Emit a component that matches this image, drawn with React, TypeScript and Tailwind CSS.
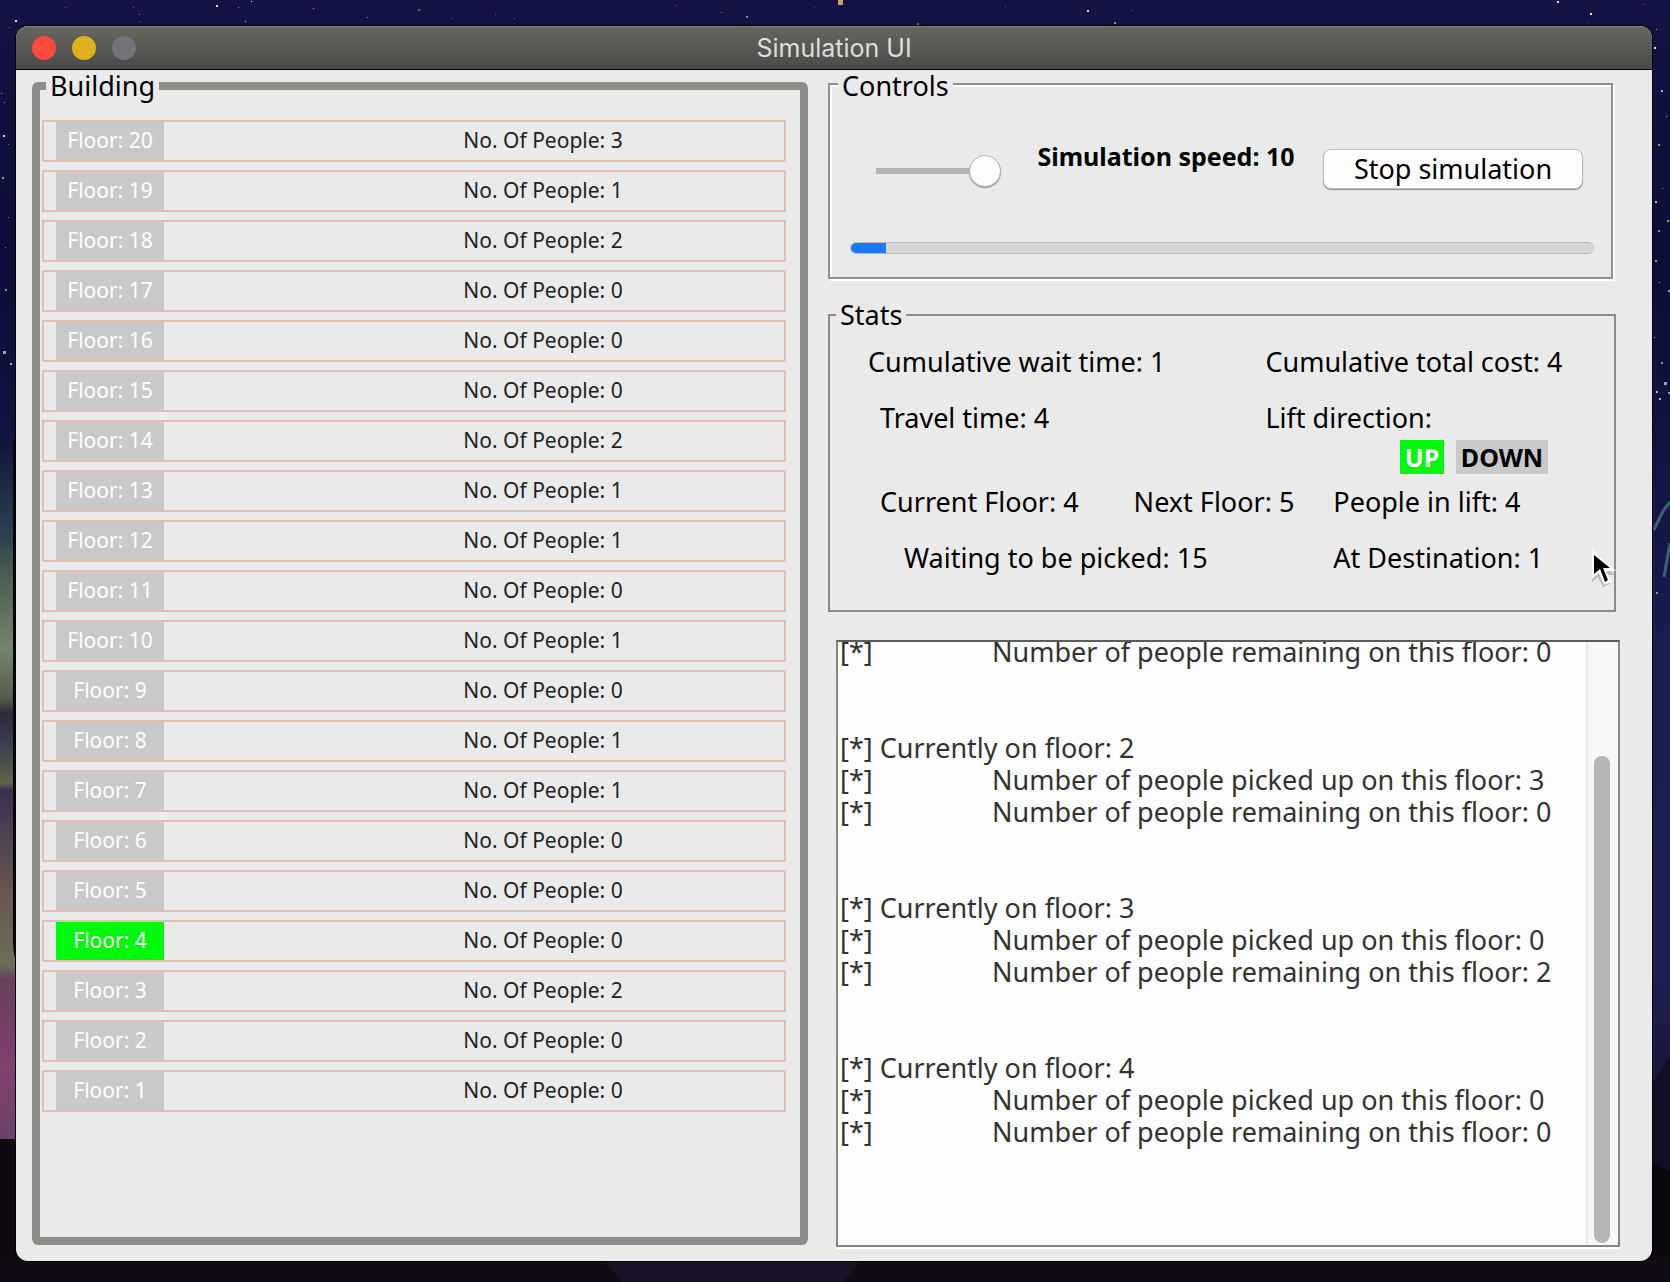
import type { ReactNode } from 'react';

const people = [3, 1, 2, 0, 0, 0, 2, 1, 1, 0, 1, 0, 1, 1, 0, 0, 0, 2, 0, 0];
const floors = people.map((count, i) => ({ number: people.length - i, count }));
const currentFloor = 4;

type LogLine = { text?: string; indent?: boolean };

const visit = (floor: number, picked: number, remaining: number): LogLine[] => [
  { text: `Currently on floor: ${floor}` },
  { text: `Number of people picked up on this floor: ${picked}`, indent: true },
  { text: `Number of people remaining on this floor: ${remaining}`, indent: true },
  {},
  {},
];

const logLines: LogLine[] = [
  { text: 'Number of people remaining on this floor: 0', indent: true },
  {},
  {},
  ...visit(2, 3, 0),
  ...visit(3, 0, 2),
  ...visit(4, 0, 0),
  {},
];

const topStars = [
  [15, 20, 2, '#e8d8d0'], [9, 27, 1, '#c07060'], [133, 7, 1, '#a06070'], [139, 14, 1, '#c07080'], [140, 21, 1, '#b06060'],
  [65, 7, 1, '#8060a0'], [216, 5, 2, '#e8e0d0'], [238, 7, 1, '#c080b0'], [245, 21, 1, '#e0c0a0'], [251, 1, 1, '#f0f0e0'],
  [313, 8, 1, '#c09080'], [367, 17, 1, '#a08070'], [418, 9, 2, '#705068'], [451, 18, 1, '#a06050'], [495, 14, 1, '#806090'],
  [514, 18, 1, '#806090'], [676, 5, 1, '#b04080'], [721, 12, 1, '#c08050'], [746, 16, 2, '#a07080'], [814, 7, 1, '#504080'],
  [838, 0, 5, '#d09a60'], [917, 23, 2, '#a05050'], [1005, 6, 1, '#6050a0'], [1087, 10, 2, '#f0d890'], [1114, 22, 2, '#a08070'],
  [1132, 10, 1, '#6060a0'], [1557, 1, 2, '#f0e0d0'], [1590, 13, 2, '#f0f0f0'], [1587, 22, 1, '#8060a0'], [1644, 4, 1, '#b060a0'],
] as const;

const sideStars = [
  [3, 135, 2, '#d0d0d0'], [4, 102, 1, '#b070a0'], [8, 144, 1, '#a05070'], [2, 177, 2, '#70b0a0'], [8, 217, 1, '#c07060'],
  [5, 247, 1, '#a060a0'], [5, 289, 2, '#60b090'], [3, 351, 3, '#90b090'], [10, 363, 2, '#b0b0b0'], [1, 93, 1, '#a0a0d0'],
  [1656, 29, 1, '#a0a0d0'], [1654, 47, 2, '#e0e0e0'], [1661, 90, 2, '#a0b0c0'], [1666, 116, 1, '#b0b0d0'], [1658, 144, 2, '#b09070'],
  [1662, 188, 1, '#8090c0'], [1655, 201, 2, '#c0c0a0'], [1667, 220, 2, '#90a080'], [1658, 230, 2, '#9090c0'], [1655, 260, 2, '#8090a0'],
  [1659, 282, 1, '#c0b080'], [1668, 290, 2, '#70b0b0'], [1664, 382, 3, '#80b0a0'], [1656, 391, 2, '#b0c0a0'], [1668, 392, 2, '#80a0c0'],
  [1659, 398, 2, '#c0a090'], [1661, 362, 2, '#70a0b0'], [1654, 337, 1, '#c0c0c0'], [1656, 592, 2, '#80a070'],
] as const;

function Wallpaper() {
  return (
    <svg className="absolute inset-0 h-full w-full" viewBox="0 0 1670 1282" preserveAspectRatio="none" aria-hidden="true">
      <defs>
        <linearGradient id="sky" x1="0" y1="0" x2="0" y2="1">
          <stop offset="0" stopColor="#131345" />
          <stop offset="0.2" stopColor="#0b0d36" />
          <stop offset="0.5" stopColor="#181c4e" />
          <stop offset="0.75" stopColor="#1e2054" />
          <stop offset="0.9" stopColor="#15102a" />
          <stop offset="1" stopColor="#0b070d" />
        </linearGradient>
        <linearGradient id="aurora" x1="0" y1="440" x2="0" y2="1140" gradientUnits="userSpaceOnUse">
          <stop offset="0" stopColor="#10153c" />
          <stop offset="0.14" stopColor="#2b4450" />
          <stop offset="0.2" stopColor="#4f6052" />
          <stop offset="0.3" stopColor="#75856c" />
          <stop offset="0.37" stopColor="#565a4c" />
          <stop offset="0.39" stopColor="#2c2a3e" />
          <stop offset="0.44" stopColor="#3f4150" />
          <stop offset="0.49" stopColor="#606549" />
          <stop offset="0.5" stopColor="#3c3050" />
          <stop offset="0.65" stopColor="#675850" />
          <stop offset="0.75" stopColor="#6f6e58" />
          <stop offset="0.77" stopColor="#66405f" />
          <stop offset="0.9" stopColor="#83406e" />
          <stop offset="1" stopColor="#6a4468" />
        </linearGradient>
      </defs>
      <rect width="1670" height="1282" fill="url(#sky)" />
      <rect y="440" width="30" height="699" fill="url(#aurora)" />
      <path d="M13 440h3v520q-3-6-3-20z" fill="#08070c" />
      <rect y="1139" width="30" height="143" fill="#0f0a12" />
      <path d="M1670 502l-7 9-7 14-2 5M1670 543l-6 34" fill="none" stroke="#3f6070" strokeWidth="3" />
      <path d="M1650 1085l8-10 6-10 6-8v110l-20-4z" fill="#100e22" />
      <path d="M1650 1160l20 12v110h-20z" fill="#0a070c" />
      <rect y="1256" width="1670" height="26" fill="#110b15" />
      <path d="M600 1256h265l-22 26H622z" fill="#1b1228" />
      {[...topStars, ...sideStars].map(([x, y, size, fill]) => (
        <rect key={`${x}-${y}`} x={x} y={y} width={size} height={size} fill={fill} />
      ))}
    </svg>
  );
}

function Pointer() {
  return (
    <svg className="absolute -right-1 bottom-5 h-10 w-7" viewBox="0 0 28 40" aria-hidden="true">
      <path d="M2 4v28l6-5 5 10 7-3-3-9h8z" fill="#8a8a88" opacity="0.5" />
      <path d="M2 0v29l7-6 5 12 7-3-5-11h10z" fill="#fff" />
      <path d="M4 5v19l6-5 5 13 3-2-5-12h7z" fill="#000" />
    </svg>
  );
}

function TitleBar() {
  return (
    <header className="relative flex h-11 items-center border-t border-b border-t-[#85857c] border-b-black bg-linear-to-b from-[#66665f] to-[#4a4a4b] px-4">
      <div className="flex gap-4">
        <button type="button" aria-label="Close" className="size-6 rounded-full bg-[#fb4a3e]" />
        <button type="button" aria-label="Minimize" className="size-6 rounded-full bg-[#e0b01c]" />
        <button type="button" aria-label="Zoom" className="size-6 rounded-full bg-[#73737a]" />
      </div>
      <h1 className="absolute inset-x-0 text-center font-['Inter',sans-serif] text-[25px] leading-8 text-[#dededa]">Simulation UI</h1>
    </header>
  );
}

function Legend({ children }: { children: ReactNode }) {
  return <legend className="ml-2 bg-[#eaeaea] px-1 pt-1 leading-6">{children}</legend>;
}

function Building() {
  return (
    <fieldset className="mt-px flex-776 rounded-md border-8 border-[#8c8c88]">
      <legend className="ml-1.5 px-1 leading-[30px]">Building</legend>
      <ul className="mt-[19px] mr-3.5 ml-0.5 flex flex-col gap-2 text-[21px] text-[#222]">
        {floors.map(({ number, count }) => (
          <li key={number} className="flex h-[42px] items-stretch border-2 border-[#dfc0b4] pl-3">
            <span
              className={
                number === currentFloor
                  ? 'flex w-[108px] items-center justify-center bg-[#00f80c] text-white'
                  : 'flex w-[108px] items-center justify-center bg-[#c9c9c9] text-white'
              }
            >
              Floor: {number}
            </span>
            <span className="flex flex-1 items-center justify-center pl-[138px]">
              <span>No. Of People: {count}</span>
            </span>
          </li>
        ))}
      </ul>
    </fieldset>
  );
}

function Controls() {
  return (
    <fieldset className="mr-[7px] border-2 border-[#90908c] shadow-[inset_2px_2px_#fff,2px_2px_#fff]">
      <Legend>Controls</Legend>
      <div className="mt-[42px] flex items-start justify-between pr-7 pl-[46px]">
        <input
          id="speed"
          type="range"
          min={1}
          max={10}
          defaultValue={10}
          className="mt-[15px] h-8 w-[125px] appearance-none bg-transparent [&::-webkit-slider-runnable-track]:h-1.5 [&::-webkit-slider-runnable-track]:bg-[#b4b4b2] [&::-webkit-slider-thumb]:-mt-[13px] [&::-webkit-slider-thumb]:size-8 [&::-webkit-slider-thumb]:appearance-none [&::-webkit-slider-thumb]:rounded-full [&::-webkit-slider-thumb]:border [&::-webkit-slider-thumb]:border-[#b8b8b8] [&::-webkit-slider-thumb]:bg-[#fdfdfd] [&::-webkit-slider-thumb]:shadow-[0_1px_1px_#8f8f8f]"
        />
        <label htmlFor="speed" className="ml-2 text-[25px] leading-8 font-bold">
          Simulation speed: 10
        </label>
        <button
          type="button"
          className="mt-[9px] h-10 w-[260px] rounded-lg border border-[#bdbdbd] bg-[#fdfdfd] leading-8 shadow-[0_1px_1px_#8f8f8f]"
        >
          Stop simulation
        </button>
      </div>
      <div className="mt-[53px] mr-[17px] mb-[23px] ml-5 flex">
        <progress
          aria-label="Simulation progress"
          value={1}
          max={21}
          className="h-3 w-full appearance-none overflow-hidden rounded-full border border-[#b9b9b9] bg-[#d6d6d6] [&::-webkit-progress-bar]:bg-[#d6d6d6] [&::-webkit-progress-inner-element]:bg-[#d6d6d6] [&::-webkit-progress-value]:bg-[#1a78fb]"
        />
      </div>
    </fieldset>
  );
}

function Stats() {
  return (
    <fieldset className="relative mt-[21px] mr-1 border-2 border-[#8a8a88] leading-8">
      <legend className="ml-1.5 px-1 leading-[30px]">Stats</legend>
      <div className="mt-4 mb-9 flex flex-col">
        <div className="grid grid-cols-[436fr_349fr]">
          <p className="pl-[38px]">Cumulative wait time: 1</p>
          <p>Cumulative total cost: 4</p>
        </div>
        <div className="mt-6 grid grid-cols-[436fr_349fr]">
          <p className="pl-[50px]">Travel time: 4</p>
          <p>Lift direction:</p>
        </div>
        <div className="mt-1.5 flex justify-end gap-3 pr-[66px] text-[25px] leading-[34px] font-bold">
          <span className="w-11 bg-[#00f80c] text-center text-white">UP</span>
          <span className="w-[92px] bg-[#c9c9c9] text-center">DOWN</span>
        </div>
        <div className="mt-3 grid grid-cols-[304fr_200fr_281fr]">
          <p className="pl-[50px]">Current Floor: 4</p>
          <p>Next Floor: 5</p>
          <p>People in lift: 4</p>
        </div>
        <div className="mt-6 grid grid-cols-[504fr_281fr]">
          <p className="pl-[74px]">Waiting to be picked: 15</p>
          <p>At Destination: 1</p>
        </div>
      </div>
      <Pointer />
    </fieldset>
  );
}

function Log() {
  return (
    <section
      aria-label="Simulation log"
      className="mt-7 ml-2 flex min-h-0 flex-1 border-2 border-[#858583] border-t-[#5c5c5c] bg-[#fdfdfd] shadow-[0_2px_#fff]"
    >
      <div className="flex h-[602px] flex-1 flex-col justify-end overflow-hidden pl-0.5 text-[#33332e]">
        {logLines.map((line, i) => (
          <p key={i} className="flex h-8 shrink-0 leading-8 whitespace-pre">
            {line.text && <span className={line.indent ? 'w-[152px]' : ''}>{'[*] '}</span>}
            {line.text && <span>{line.text}</span>}
          </p>
        ))}
      </div>
      <div className="flex w-8 flex-col justify-end border-l-2 border-[#e9e9e9] bg-[#f8f8f8] px-1.5 pb-0.5">
        <div className="h-[81%] w-4 rounded-full bg-[#b5b5b4]" />
      </div>
    </section>
  );
}

export default function App() {
  return (
    <div className="relative flex min-h-screen bg-[#0f0d2c] pt-[26px] pr-[18px] pb-[21px] pl-4 font-['Noto_Sans',sans-serif] text-[27px] text-black">
      <Wallpaper />
      <main className="relative flex flex-1 flex-col overflow-hidden rounded-xl bg-[#eaeaea] shadow-[0_0_0_1px_#000]">
        <TitleBar />
        <div className="flex flex-1 gap-5 pr-8 pl-4">
          <div className="flex flex-776 pb-4">
            <Building />
          </div>
          <div className="flex flex-792 flex-col pb-3.5">
            <Controls />
            <Stats />
            <Log />
          </div>
        </div>
      </main>
    </div>
  );
}
